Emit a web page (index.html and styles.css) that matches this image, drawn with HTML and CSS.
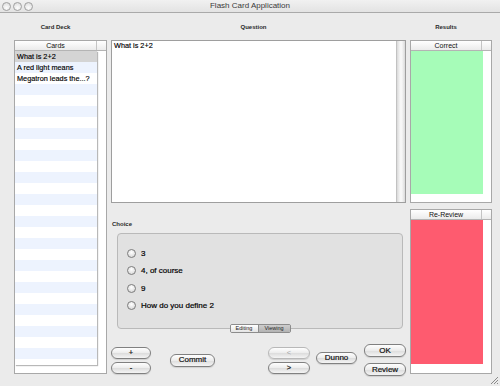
FILE: index.html
```html
<!DOCTYPE html>
<html lang="en">
<head>
  <meta charset="UTF-8">
  <title>Flash Card Application</title>
  <link rel="stylesheet" href="styles.css">
</head>
<body>
  <div class="window">
    <div class="titlebar">
      <div class="lights"><span></span><span></span><span></span></div>
      <div class="title">Flash Card Application</div>
      <div class="spacer"></div>
    </div>

    <div class="content">
      <!-- card deck -->
      <div class="col deck">
        <div class="caption">Card Deck</div>
        <div class="table">
          <div class="thead"><div class="th">Cards</div><div class="corner"></div></div>
          <div class="rows">
            <div class="row sel">What is 2+2</div>
            <div class="row">A red light means</div>
            <div class="row">Megatron leads the...?</div>
          </div>
        </div>
      </div>

      <!-- question / choice -->
      <div class="col center">
        <div class="caption">Question</div>
        <div class="question">
          <div class="qtext">What is 2+2</div>
          <div class="qbar"></div>
        </div>
        <div class="choice-label">Choice</div>
        <div class="group">
          <div class="answers">
            <div class="answer"><span class="radio"></span>3</div>
            <div class="answer"><span class="radio"></span>4, of course</div>
            <div class="answer"><span class="radio"></span>9</div>
            <div class="answer"><span class="radio"></span>How do you define 2</div>
          </div>
          <div class="segmented">
            <span class="seg">Editing</span>
            <span class="seg on">Viewing</span>
          </div>
        </div>
        <div class="buttons">
          <div class="stack pm">
            <button class="btn">+</button>
            <button class="btn">-</button>
          </div>
          <button class="btn commit">Commit</button>
          <div class="stack nav">
            <button class="btn dim">&lt;</button>
            <button class="btn">&gt;</button>
          </div>
          <button class="btn dunno">Dunno</button>
          <div class="stack ok">
            <button class="btn">OK</button>
            <button class="btn">Review</button>
          </div>
        </div>
      </div>

      <!-- results -->
      <div class="col results">
        <div class="caption">Results</div>
        <div class="table correct">
          <div class="thead"><div class="th">Correct</div><div class="corner"></div></div>
          <div class="fill green"></div>
        </div>
        <div class="table review">
          <div class="thead"><div class="th">Re-Review</div><div class="corner"></div></div>
          <div class="fill red"></div>
        </div>
      </div>
    </div>

    <svg class="grip" width="10" height="10" viewBox="0 0 10 10">
      <path d="M9 2 L2 9 M9 5 L5 9 M9 8 L8 9" stroke="#8a8a8a" stroke-width="1" fill="none"/>
    </svg>
  </div>
</body>
</html>
```

FILE: styles.css
```css
* {
  box-sizing: border-box;
}
body {
  margin: 0;
  font-family: "Liberation Sans", Arial, sans-serif;
  background: #ebebeb;
  color: #111;
}
.window {
  width: 500px;
  height: 386px;
  position: relative;
  overflow: hidden;
  background: #ebebeb;
}

/* title bar */
.titlebar {
  height: 13px;
  display: flex;
  align-items: center;
  border-bottom: 1px solid #a9a9a9;
  background: linear-gradient(#f1f1f1, #e3e3e3);
}
.lights {
  width: 36px;
  display: flex;
  gap: 2px;
  padding-left: 2px;
}
.lights span {
  width: 9px;
  height: 9px;
  border-radius: 50%;
  border: 1px solid #a0a0a0;
  background: radial-gradient(circle at 50% 70%, #fdfdfd, #d8d8d8);
}
.title {
  flex: 1;
  text-align: center;
  font-size: 8px;
  line-height: 12px;
  color: #3a3a3a;
}
.spacer {
  width: 36px;
}

/* columns */
.content {
  display: flex;
  gap: 4px;
  padding: 0 8px 0 14px;
}
.col {
  display: flex;
  flex-direction: column;
}
.deck { width: 93px; }
.center { width: 295px; }
.results { width: 82px; }

.caption {
  font-size: 6px;
  font-weight: bold;
  text-align: center;
  line-height: 10px;
  padding: 9px 10px 8px 0;
  color: #2a2a2a;
}

/* table views */
.table {
  display: flex;
  flex-direction: column;
  background: #fff;
  border: 1px solid #a8a8a8;
}
.deck .table {
  height: 334px;
}
.thead {
  display: flex;
  height: 10px;
  border-bottom: 1px solid #b4b4b4;
  background: linear-gradient(#ffffff, #ebebeb);
  font-size: 7px;
  line-height: 9px;
  color: #111;
}
.th {
  flex: 1;
  text-align: center;
  border-right: 1px solid #c4c4c4;
}
.corner {
  width: 9px;
}
.rows {
  width: 82px;
  height: 314px;
  background: repeating-linear-gradient(#fff 0 11px, #edf3fe 11px 22px);
  box-shadow: 1px 1px 1px rgba(0, 0, 0, 0.28);
}
.row {
  height: 11px;
  line-height: 11px;
  font-size: 7.3px;
  padding-left: 2px;
  color: #000;
  white-space: nowrap;
  -webkit-text-stroke: 0.15px #000;
}
.row.sel {
  background: #d4d4d4;
}

/* question */
.question {
  height: 163px;
  display: flex;
  border: 1px solid #9e9e9e;
  background: #fff;
}
.qtext {
  flex: 1;
  font-size: 7.3px;
  line-height: 10px;
  padding: 0 2px;
  color: #000;
  -webkit-text-stroke: 0.15px #000;
}
.qbar {
  width: 9px;
  border-left: 1px solid #c2c2c2;
  background: linear-gradient(90deg, #d9d9d9, #f7f7f7 40%, #f7f7f7 60%, #dadada);
}

.choice-label {
  font-size: 6px;
  font-weight: bold;
  line-height: 10px;
  margin: 16px 0 4px 1px;
  color: #2a2a2a;
}
.group {
  height: 96px;
  margin: 0 3px 0 6px;
  display: flex;
  flex-direction: column;
  border: 1px solid #b9b9b9;
  border-radius: 4px;
  background: #e1e1e1;
}
.answers {
  padding: 11px 0 0 9px;
}
.answer {
  display: flex;
  align-items: center;
  gap: 5px;
  height: 17.3px;
  font-size: 8px;
  color: #000;
  -webkit-text-stroke: 0.2px #000;
}
.radio {
  width: 9px;
  height: 9px;
  border-radius: 50%;
  border: 1px solid #7c7c7c;
  background: radial-gradient(circle at 50% 35%, #ffffff, #d2d2d2);
}
.segmented {
  display: flex;
  margin: auto auto -5px;
  height: 9px;
  border: 1px solid #8c8c8c;
  border-radius: 2px;
  overflow: hidden;
  font-size: 5.5px;
  line-height: 7px;
  color: #222;
}
.seg {
  width: 27px;
  text-align: center;
  background: linear-gradient(#ffffff, #e4e4e4);
}
.seg.on {
  width: 32px;
  border-left: 1px solid #8c8c8c;
  background: linear-gradient(#cdcdcd, #b3b3b3);
}

/* push buttons */
.buttons {
  display: flex;
  align-items: center;
  height: 32px;
  margin-top: 15px;
}
.stack {
  display: flex;
  flex-direction: column;
  gap: 3px;
}
.btn {
  height: 12px;
  padding: 0;
  border: 1px solid #808080;
  border-radius: 6px;
  background: linear-gradient(#fefefe, #ececec 50%, #dcdcdc 51%, #f4f4f4);
  box-shadow: 0 1px 1px rgba(0, 0, 0, 0.12);
  font-family: inherit;
  font-size: 7.5px;
  line-height: 10px;
  color: #111;
  text-align: center;
  -webkit-text-stroke: 0.2px #111;
}
.btn.dim {
  color: #a8a8a8;
  border-color: #b8b8b8;
  -webkit-text-stroke: 0;
}
.pm { width: 40px; }
.commit {
  width: 45px;
  height: 13px;
  margin-left: 19px;
  font-size: 8px;
}
.nav {
  width: 42px;
  margin-left: 53px;
}
.dunno {
  width: 41px;
  margin: 0 0 5px 6px;
  font-size: 8px;
}
.ok {
  width: 42px;
  margin-left: 7px;
  gap: 6px;
}
.ok .btn {
  height: 13px;
  font-size: 8px;
}

/* results */
.correct {
  height: 163px;
}
.review {
  height: 165px;
  margin-top: 6px;
}
.fill {
  width: 72px;
}
.green {
  height: 143px;
  background: #a6fcb8;
}
.red {
  height: 144px;
  background: #fe5b6f;
}

.grip {
  position: absolute;
  right: 1px;
  bottom: 1px;
}
```
